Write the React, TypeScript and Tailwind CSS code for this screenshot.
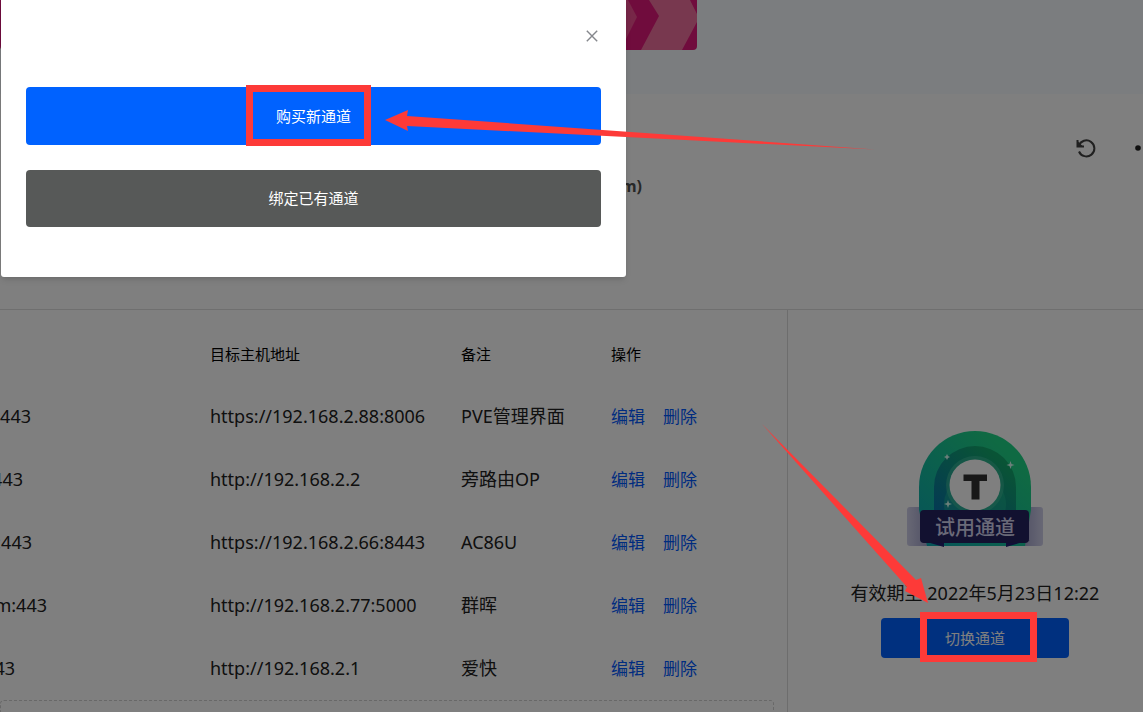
import React from "react";

type Host = { domain: string; clip: string; target: string; note: string };

const hosts: Host[] = [
  { domain: "443", clip: "w-[31px]", target: "https://192.168.2.88:8006", note: "PVE管理界面" },
  { domain: "443", clip: "w-[23px]", target: "http://192.168.2.2", note: "旁路由OP" },
  { domain: ":443", clip: "w-[32px]", target: "https://192.168.2.66:8443", note: "AC86U" },
  { domain: "m:443", clip: "w-[47px]", target: "http://192.168.2.77:5000", note: "群晖" },
  { domain: "43", clip: "w-[15px]", target: "http://192.168.2.1", note: "爱快" },
];

function Banner() {
  return (
    <div className="h-[94px] bg-[#f7fafe]">
      <svg className="block h-[50px] w-[697px] rounded-b-[4px]" viewBox="0 0 697 50" aria-hidden="true">
        <rect width="697" height="50" fill="#e0197a" />
        <path d="M622 0h6l9 17-15 30z" fill="#ee4f90" />
        <path d="M649 0h41l7 14v8l-15 28h-41l18-34z" fill="#f0709f" />
      </svg>
    </div>
  );
}

function ChannelBadge() {
  return (
    <svg width="136" height="118" viewBox="0 0 136 118" role="img" aria-label="试用通道" className="block">
      <defs>
        <linearGradient id="arch" x1="1" y1="0" x2="0" y2="1">
          <stop offset="0.2" stopColor="#1fd486" />
          <stop offset="1" stopColor="#0ca7b4" />
        </linearGradient>
        <linearGradient id="inner" x1="1" y1="0" x2="0" y2="1">
          <stop offset="0.2" stopColor="#13a86c" />
          <stop offset="1" stopColor="#0873a8" />
        </linearGradient>
        <linearGradient id="wing" x1="0" y1="0" x2="1" y2="0">
          <stop offset="0" stopColor="#d0d0ea" />
          <stop offset="0.13" stopColor="#a9a9cf" />
          <stop offset="0.87" stopColor="#a9a9cf" />
          <stop offset="1" stopColor="#d0d0ea" />
        </linearGradient>
      </defs>
      <path d="M0 80q0-3 3-3h130q3 0 3 3v33q0 3-3 3h-26V90H30v26H3q-3 0-3-3z" fill="url(#wing)" />
      <path d="M12 80V57a56 56 0 0 1 112 0v23l-6 36H20z" fill="url(#arch)" />
      <path d="M27 82V57a41 41 0 0 1 82 0v25z" fill="url(#inner)" />
      <path d="M38 82a31 31 0 1 1 60 0z" fill="#27c995" opacity=".35" />
      <circle cx="68" cy="55" r="29" fill="#3dba9a" opacity=".6" />
      <circle cx="68" cy="55" r="25.500" fill="#fff" />
      <path d="M56.500 44.500h23.500v6.500H72.500v18.500h-8V51h-8z" fill="#303030" />
      <path d="M40 24l1 2 2 1-2 1-1 2-1-2-2-1 2-1zM103.500 31l1 3 3 1-3 1-1 3-1-3-3-1 3-1zM41 70l1 3 3 1-3 1-1 3-1-3-3-1 3-1z" fill="#d7fff5" />
      <path d="M13 110l24 7v-6zM123 110l-24 7v-6z" fill="#201e70" />
      <rect x="13" y="80" width="109" height="33" rx="4" fill="#252260" />
      <text x="68" y="105" textAnchor="middle" className="fill-[#d4d4f0] text-[20px] font-medium">试用通道</text>
    </svg>
  );
}

function Annotations() {
  return (
    <svg className="pointer-events-none absolute left-0 top-0" width="1143" height="712" viewBox="0 0 1143 712" aria-hidden="true">
      <g fill="none" stroke="#fd3a38">
        <rect x="249.500" y="88.500" width="118" height="54" strokeWidth="7" />
        <rect x="923.500" y="615.500" width="110" height="43" strokeWidth="7" />
      </g>
      <g fill="#fd3a38">
        <path d="M385 120l23-10-1 6 468 33.500-468-23.500 1 5z" />
        <path d="M762 424l154 156 5-2 7 25-23-12 2-4z" />
      </g>
    </svg>
  );
}

function PurchaseDialog() {
  return (
    <div role="dialog" aria-modal="true" aria-label="通道" className="absolute left-px top-0 w-[625px] rounded-b-[3px] bg-white px-[25px] pb-[50px] pt-[24px] text-[15px] text-white shadow-md">
      <div className="flex justify-end">
        <button aria-label="关闭" className="flex h-[24px] w-[18px] items-center justify-center">
          <svg width="12" height="12" viewBox="0 0 12 12" stroke="#85878c" strokeWidth="1.400" fill="none">
            <path d="M.8.800l10.400 10.400M11.200.800L.8 11.200" />
          </svg>
        </button>
      </div>
      <div className="mt-[39px] flex flex-col gap-[25px]">
        <button className="h-[58px] rounded-[4px] bg-[#0062ff]">购买新通道</button>
        <button className="h-[57px] rounded-[4px] bg-[#575958]">绑定已有通道</button>
      </div>
    </div>
  );
}

export default function App() {
  return (
    <div className="relative h-screen overflow-hidden bg-white font-['Noto_Sans','Noto_Sans_CJK_SC',sans-serif] text-[18px] text-[#202020]">
      <Banner />
      <header className="flex h-[216px] justify-between border-b border-[#dedede]">
        <h1 className="w-[642px] pt-[80px] text-right text-[16px] font-bold leading-[24px] text-[#505050]">m)</h1>
        <div className="-mr-[22px] flex h-[108px] items-center gap-[39px]">
          <button aria-label="刷新">
            <svg className="block" width="20" height="20" viewBox="0 0 20 20" fill="none" stroke="#404040" strokeWidth="2">
              <path d="M2.800 7.800A8 8 0 1 1 3 13.500" />
              <path d="M1.500 2v6.500H8" />
              <path d="M1 2.500V9h6.500z" fill="#404040" stroke="none" />
            </svg>
          </button>
          <button aria-label="更多">
            <svg className="block" width="30" height="6" viewBox="0 0 30 6" fill="#202020">
              <circle cx="3" cy="3" r="2.800" />
              <circle cx="15" cy="3" r="2.800" />
              <circle cx="27" cy="3" r="2.800" />
            </svg>
          </button>
        </div>
      </header>

      <main className="flex">
        <section className="flex-1 pr-[13px] pt-[13px]">
          <table className="w-full table-fixed text-left">
            <thead>
              <tr className="h-[62px] text-[15px] text-black">
                <th className="w-[210px]" aria-label="域名" />
                <th className="w-[251px] font-normal">目标主机地址</th>
                <th className="w-[150px] font-normal">备注</th>
                <th className="font-normal">操作</th>
              </tr>
            </thead>
            <tbody>
              {hosts.map((host) => (
                <tr key={host.target} className="h-[63px]">
                  <td>
                    <div className={"flex justify-end overflow-hidden " + host.clip}>{host.domain}</div>
                  </td>
                  <td className="whitespace-nowrap">{host.target}</td>
                  <td>{host.note}</td>
                  <td>
                    <div className="flex gap-[18px] text-[17px] text-[#0058ff]">
                      <a href="#edit">编辑</a>
                      <a href="#delete">删除</a>
                    </div>
                  </td>
                </tr>
              ))}
            </tbody>
          </table>
          <button aria-label="添加" className="block h-[60px] w-full rounded-[4px] border border-dashed border-[#d0d0d0]" />
        </section>

        <aside className="flex w-[356px] flex-col items-center border-l border-[#dadada] pl-[19px] pt-[120px]">
          <ChannelBadge />
          <p className="mt-[32px] whitespace-nowrap leading-[26px]">有效期至 2022年5月23日12:22</p>
          <button className="mt-[12px] h-[40px] w-[188px] rounded-[4px] bg-[#0060ff] text-[15px] text-white">切换通道</button>
        </aside>
      </main>

      <div className="absolute inset-0 bg-black/50" />
      <PurchaseDialog />
      <Annotations />
    </div>
  );
}
